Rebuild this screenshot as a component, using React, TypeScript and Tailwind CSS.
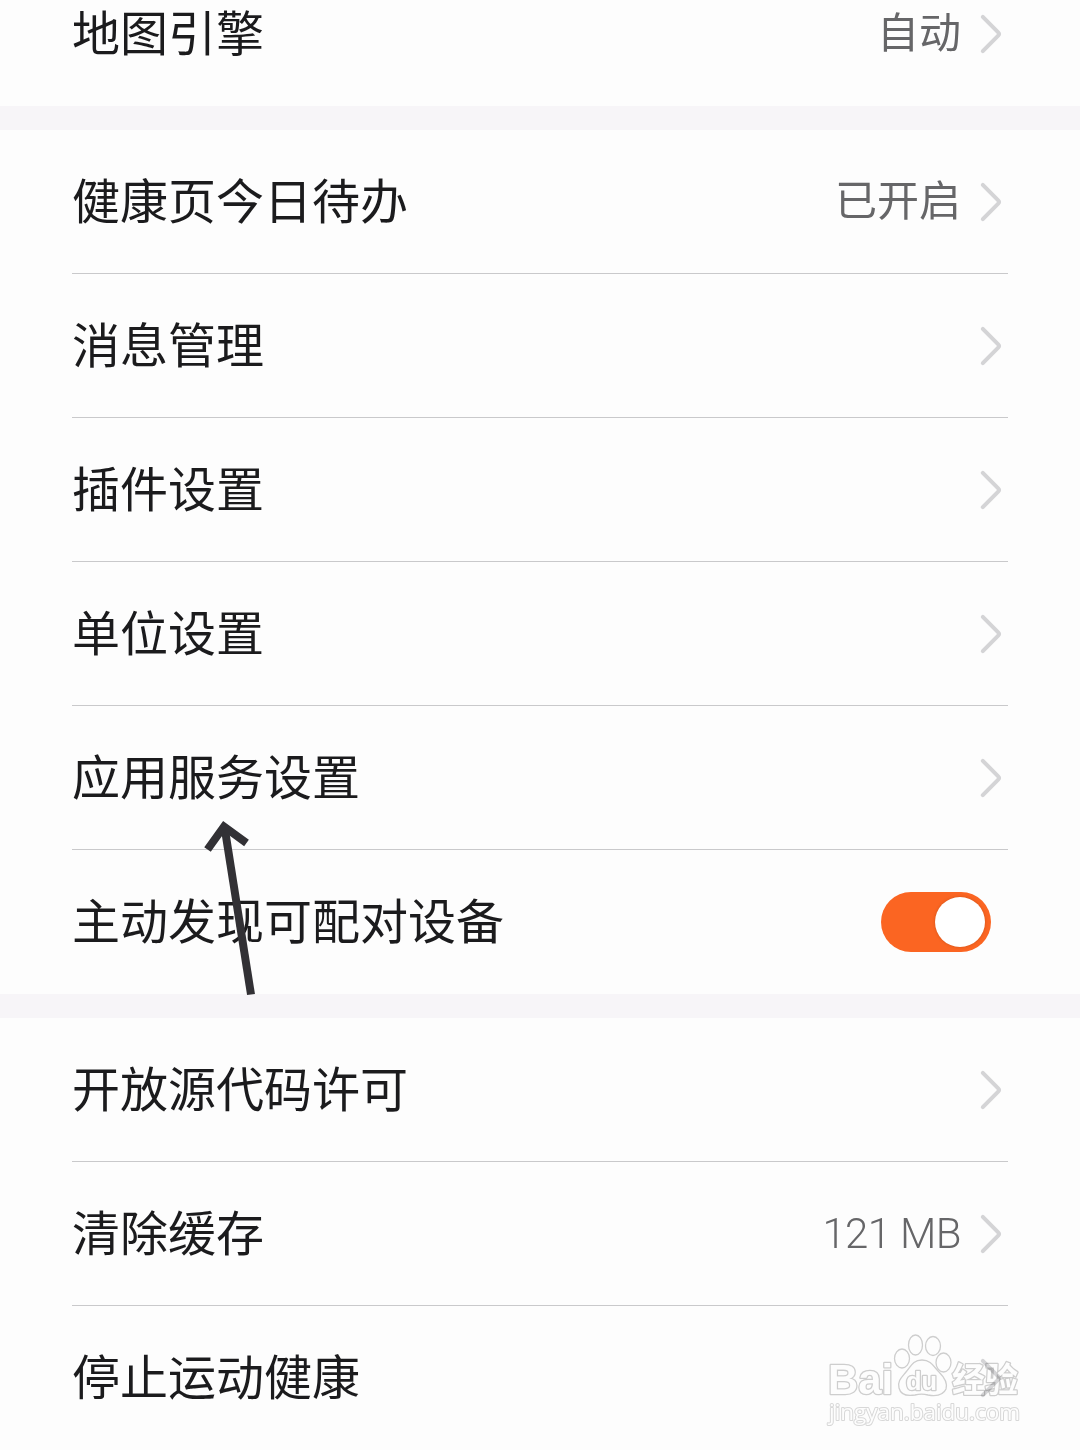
import { useState } from 'react';
import clsx from 'clsx';

type Item = {
  label: string;
  value?: string;
  toggle?: boolean;
};

const groups: Item[][] = [
  [{ label: '地图引擎', value: '自动' }],
  [
    { label: '健康页今日待办', value: '已开启' },
    { label: '消息管理' },
    { label: '插件设置' },
    { label: '单位设置' },
    { label: '应用服务设置' },
    { label: '主动发现可配对设备', toggle: true },
  ],
  [
    { label: '开放源代码许可' },
    { label: '清除缓存', value: '121 MB' },
    { label: '停止运动健康' },
  ],
];

function Chevron() {
  return (
    <svg width="24" height="42" viewBox="0 0 24 42" fill="none" className="shrink-0">
      <path d="M3.8 3.8 19.2 19.4Q20.8 21 19.2 22.6L3.8 38.2" stroke="#d4d4d6" strokeWidth="4" strokeLinecap="round" />
    </svg>
  );
}

function Toggle() {
  const [on, setOn] = useState(true);
  return (
    <button
      role="switch"
      aria-checked={on}
      onClick={() => setOn(!on)}
      className={clsx('mr-[17px] flex h-[60px] w-[110px] items-center rounded-full px-1.5', on ? 'justify-end bg-[#fb6522]' : 'justify-start bg-gray-300')}
    >
      <span className="size-[50px] rounded-full bg-white shadow-[0_0_3px_rgba(120,50,10,0.35)]" />
    </button>
  );
}

function Row({ item, last }: { item: Item; last: boolean }) {
  return (
    <div className={clsx('mx-[72px] flex h-36 items-center justify-between border-b', last ? 'border-transparent' : 'border-[#c9c9cb]')}>
      <span className="pt-[3px] text-[48px] leading-none text-[#1b1b1d]">{item.label}</span>
      {item.toggle ? (
        <Toggle />
      ) : (
        <div className="flex items-center gap-[18px] pr-[5px]">
          {item.value && (
            <span className={clsx('text-[42px] leading-none text-[#666668]', /\d/.test(item.value) && 'font-light tracking-[-0.6px]')}>{item.value}</span>
          )}
          <Chevron />
        </div>
      )}
    </div>
  );
}

// hand-drawn pointer to the service settings row
function Arrow() {
  return (
    <svg width="60" height="190" viewBox="200 810 60 190" fill="none" className="pointer-events-none absolute top-[810px] left-[200px]">
      <path d="M251 994.5 225 830" stroke="#323135" strokeWidth="8" />
      <path d="M207.5 849.5 224 826.5 246.5 843" stroke="#323135" strokeWidth="8" />
    </svg>
  );
}

function Watermark() {
  return (
    <svg
      width="210"
      height="110"
      viewBox="820 1325 210 110"
      className="pointer-events-none absolute top-[1325px] left-[820px] mix-blend-multiply"
      fill="#fff"
      stroke="#d0d0d0"
      strokeWidth="1.3"
      strokeLinejoin="round"
    >
      <ellipse cx="902" cy="1358.5" rx="7.5" ry="9.5" />
      <ellipse cx="915.5" cy="1345" rx="7" ry="10" />
      <ellipse cx="933" cy="1346" rx="7.5" ry="9.5" />
      <ellipse cx="943.5" cy="1362.5" rx="7.5" ry="9.5" />
      <path d="M922 1360C931 1360 934 1367 939 1372C945 1378 948 1383 946 1389C943 1396 934 1396 928 1395C924 1394 919 1394 915 1395C909 1396 901 1396 899 1388C897 1381 902 1377 906 1372C911 1366 913 1360 922 1360Z" />
      <g fontWeight="700" strokeWidth="2.6" className="[paint-order:stroke]">
        <text x="828" y="1394" fontSize="43" textLength="65" lengthAdjust="spacingAndGlyphs" className="font-['Liberation_Sans',sans-serif]">Bai</text>
        <text x="906" y="1389.5" fontSize="25" textLength="31" lengthAdjust="spacingAndGlyphs" className="font-['Liberation_Sans',sans-serif]">du</text>
        <text x="952" y="1391.5" fontSize="34" textLength="66" lengthAdjust="spacingAndGlyphs">经验</text>
      </g>
      <text x="829" y="1420" fontSize="22" fontWeight="500" strokeWidth="2" stroke="#dadada" textLength="191" lengthAdjust="spacingAndGlyphs" className="font-['Open_Sans',sans-serif] [paint-order:stroke]">jingyan.baidu.com</text>
    </svg>
  );
}

export default function App() {
  return (
    <div className="relative h-[1450px] w-[1080px] overflow-hidden bg-[#f7f5f8] font-[Roboto,'Noto_Sans_CJK_SC',sans-serif]">
      {/* first group is scrolled partly out of view */}
      <div className="-mt-[38px] flex flex-col gap-6">
        {groups.map((items, i) => (
          <section key={i} className="bg-[#fdfdfd]">
            {items.map((item, j) => (
              <Row key={item.label} item={item} last={j === items.length - 1} />
            ))}
          </section>
        ))}
      </div>
      <Arrow />
      <Watermark />
    </div>
  );
}
